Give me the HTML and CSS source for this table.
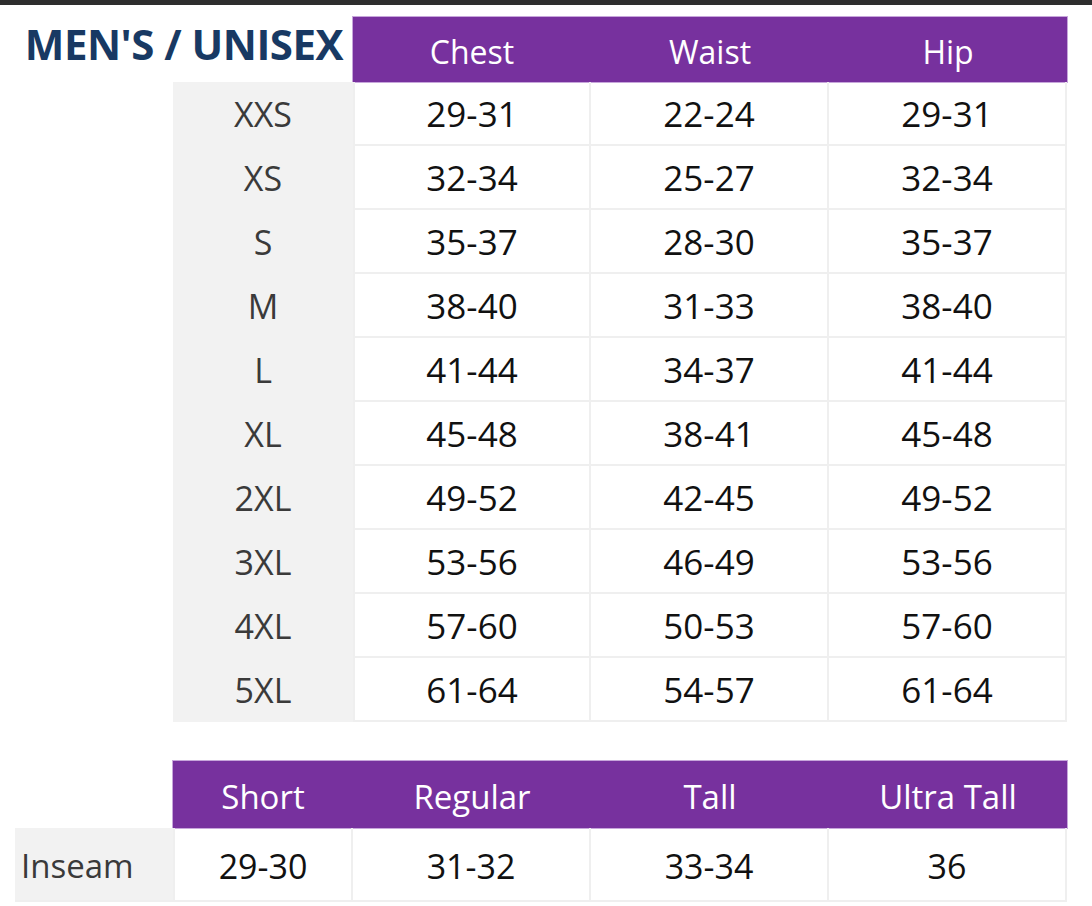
FILE: index.html
```html
<!DOCTYPE html>
<html lang="en">
<head>
<meta charset="utf-8">
<title>Men's / Unisex Size Chart</title>
<link rel="stylesheet" href="styles.css">
</head>
<body>
<div class="topbar"></div>
<main class="chart">
  <section class="sizes">
    <h1 class="title">MEN'S / UNISEX</h1>
    <div class="head-group">
      <div class="head">Chest</div>
      <div class="head">Waist</div>
      <div class="head">Hip</div>
    </div>

    <div class="size">XXS</div><div class="cell first">29-31</div><div class="cell">22-24</div><div class="cell">29-31</div>
    <div class="size">XS</div><div class="cell first">32-34</div><div class="cell">25-27</div><div class="cell">32-34</div>
    <div class="size">S</div><div class="cell first">35-37</div><div class="cell">28-30</div><div class="cell">35-37</div>
    <div class="size">M</div><div class="cell first">38-40</div><div class="cell">31-33</div><div class="cell">38-40</div>
    <div class="size">L</div><div class="cell first">41-44</div><div class="cell">34-37</div><div class="cell">41-44</div>
    <div class="size">XL</div><div class="cell first">45-48</div><div class="cell">38-41</div><div class="cell">45-48</div>
    <div class="size">2XL</div><div class="cell first">49-52</div><div class="cell">42-45</div><div class="cell">49-52</div>
    <div class="size">3XL</div><div class="cell first">53-56</div><div class="cell">46-49</div><div class="cell">53-56</div>
    <div class="size">4XL</div><div class="cell first">57-60</div><div class="cell">50-53</div><div class="cell">57-60</div>
    <div class="size">5XL</div><div class="cell first">61-64</div><div class="cell">54-57</div><div class="cell">61-64</div>
  </section>

  <section class="inseam">
    <div class="head-group wide">
      <div class="head">Short</div>
      <div class="head">Regular</div>
      <div class="head">Tall</div>
      <div class="head">Ultra Tall</div>
    </div>
    <div class="label">Inseam</div>
    <div class="cell first col-short">29-30</div>
    <div class="cell col-regular">31-32</div>
    <div class="cell col-tall">33-34</div>
    <div class="cell col-ultra">36</div>
  </section>
</main>
</body>
</html>
```

FILE: styles.css
```css
* {
  box-sizing: border-box;
}

html, body {
  margin: 0;
  padding: 0;
  background: #ffffff;
}

body {
  font-family: "Open Sans", "Noto Sans", "Liberation Sans", sans-serif;
  color: #111111;
}

.topbar {
  height: 5px;
  background: #2e2e2e;
}

.chart {
  padding-top: 12px;
}

.sizes {
  display: grid;
  grid-template-columns: 173px 180px repeat(3, 238px);
  grid-template-rows: 65px;
  grid-auto-rows: 64px;
}

.title {
  grid-column: 1 / 3;
  margin: 0;
  align-self: start;
  padding-top: 6px;
  padding-right: 10px;
  text-align: right;
  font-size: 42px;
  line-height: 1;
  font-weight: 700;
  color: #183963;
  letter-spacing: -0.5px;
}

.head-group {
  grid-column: 3 / 6;
  display: grid;
  grid-template-columns: repeat(3, 1fr);
  background: #77319e;
  box-shadow: 0 0 0 1px #c7a6db;
}

.inseam .head-group.wide {
  grid-column: 3 / 7;
  grid-row: 1;
  grid-template-columns: 180px repeat(3, 1fr);
}

.head {
  display: flex;
  align-items: center;
  justify-content: center;
  padding-top: 3px;
  color: #ffffff;
  font-size: 32px;
  font-weight: 500;
}

.inseam .head {
  font-size: 33px;
}

.size {
  grid-column: 2;
  display: flex;
  align-items: center;
  justify-content: center;
  background: #f2f2f2;
  color: #3a3a3a;
  font-size: 34px;
  font-weight: 500;
}

.cell {
  display: flex;
  align-items: center;
  justify-content: center;
  font-size: 35px;
  color: #111111;
  border-right: 2px solid #efefef;
  border-bottom: 2px solid #efefef;
}

.cell.first {
  border-left: 2px solid #efefef;
}

.inseam {
  margin-top: 39px;
  display: grid;
  grid-template-columns: 15px 158px 180px repeat(3, 238px);
  grid-template-rows: 67px 74px;
}

.label {
  grid-column: 2;
  grid-row: 2;
  display: flex;
  align-items: center;
  padding-left: 6px;
  padding-top: 2px;
  background: #f2f2f2;
  color: #3a3a3a;
  font-size: 33px;
  font-weight: 500;
  border-bottom: 2px solid #efefef;
}

.inseam .cell {
  grid-row: 2;
  font-size: 34px;
  padding-top: 3px;
}

.inseam .col-short { grid-column: 3; }
.inseam .col-regular { grid-column: 4; }
.inseam .col-tall { grid-column: 5; }
.inseam .col-ultra { grid-column: 6; }
```
